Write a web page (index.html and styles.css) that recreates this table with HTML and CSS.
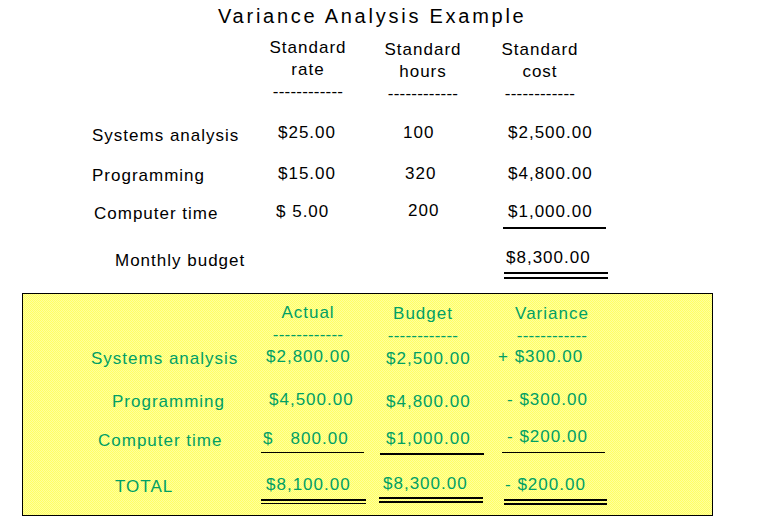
FILE: index.html
```html
<!DOCTYPE HTML>
<html>

<head>
  <title>Variance Analysis Example</title>
  <meta charset="utf-8" />
  <link rel="stylesheet" href="styles.css">
</head>

<body>
<h1 class="title">Variance Analysis Example</h1>

<!-- standard cost part -->
<div class="budget">
  <div class="row head">
    <div></div>
    <div class="hd up2">Standard<br>rate<br><span class="dash">------------</span></div>
    <div class="hd">Standard<br>hours<br><span class="dash">------------</span></div>
    <div class="hd">Standard<br>cost<br><span class="dash">------------</span></div>
  </div>
  <div class="row r1">
    <div class="lab">Systems analysis</div>
    <div class="c1">$25.00</div>
    <div class="c2">100</div>
    <div class="c3">$2,500.00</div>
  </div>
  <div class="row r2">
    <div class="lab">Programming</div>
    <div class="c1">$15.00</div>
    <div class="c2">320</div>
    <div class="c3">$4,800.00</div>
  </div>
  <div class="row r3">
    <div class="lab">Computer time</div>
    <div class="c1">$ 5.00</div>
    <div class="c2">200</div>
    <div class="c3">$1,000.00<div class="rule"></div></div>
  </div>
  <div class="row r4">
    <div class="lab">Monthly budget</div>
    <div></div>
    <div></div>
    <div class="c3">$8,300.00<div class="rule2"></div></div>
  </div>
</div>

<!-- actual vs budget part -->
<div class="variance">
  <div class="row head">
    <div></div>
    <div class="hd up1">Actual<br><span class="dash">------------</span></div>
    <div class="hd">Budget<br><span class="dash">------------</span></div>
    <div class="hd">Variance<br><span class="dash">------------</span></div>
  </div>
  <div class="row r1">
    <div class="lab">Systems analysis</div>
    <div class="c1">$2,800.00</div>
    <div class="c2">$2,500.00</div>
    <div class="c3">+ $300.00</div>
  </div>
  <div class="row r2">
    <div class="lab">Programming</div>
    <div class="c1">$4,500.00</div>
    <div class="c2">$4,800.00</div>
    <div class="c3">- $300.00</div>
  </div>
  <div class="row r3">
    <div class="lab">Computer time</div>
    <div class="c1">$   800.00<div class="rule"></div></div>
    <div class="c2">$1,000.00<div class="rule"></div></div>
    <div class="c3">- $200.00<div class="rule"></div></div>
  </div>
  <div class="row r4">
    <div class="lab">TOTAL</div>
    <div class="c1">$8,100.00<div class="rule2"></div></div>
    <div class="c2">$8,300.00<div class="rule2"></div></div>
    <div class="c3">- $200.00<div class="rule2"></div></div>
  </div>
</div>
</body>

</html>
```

FILE: styles.css
```css
* {
  margin: 0;
  padding: 0;
}

body {
  width: 780px;
  height: 518px;
  overflow: hidden;
  background: #fff;
  color: #000;
  font-family: "Liberation Sans", Arial, sans-serif;
  font-size: 17px;
  letter-spacing: 1px;
}

.title {
  margin: 4px 0 0 218px;
  font-size: 20px;
  line-height: 24px;
  font-weight: normal;
  letter-spacing: 2.75px;
}

.row {
  display: grid;
  align-items: start;
  line-height: 20px;
}

.row > div {
  white-space: pre;
}

.hd {
  width: 80px;
  line-height: 22px;
  text-align: center;
}

.dash {
  letter-spacing: 0.2px;
}

.up1 {
  margin-top: -1px;
}

.up2 {
  margin-top: -2px;
}

.rule {
  border-top: 2px solid #000;
}

.rule2 {
  height: 2px;
  border-top: 2px solid #000;
  border-bottom: 2px solid #000;
}

/* standard cost part */
.budget .row {
  grid-template-columns: 268px 115px 117px 1fr;
}

.budget .head { margin-top: 11px; }
.budget .r1 { margin-top: 18px; }
.budget .r2 { margin-top: 18px; }
.budget .r3 { margin-top: 16px; }
.budget .r4 { margin-top: 19px; }

.budget .lab {
  padding: 2px 0 0 92px;
}

.budget .r1 .lab { padding-top: 3px; }
.budget .r3 .lab { padding-left: 94px; }
.budget .r4 .lab { padding: 3px 0 0 115px; }

.budget .c1 { padding-left: 10px; }
.budget .c2 { padding-left: 20px; }
.budget .c3 { padding-left: 8px; }

.budget .r2 .c2 { padding-left: 22px; }
.budget .r3 .c1 { padding-left: 8px; }
.budget .r3 .c2 { padding-left: 25px; margin-top: -1px; }
.budget .r4 .c3 { padding-left: 6px; }

.budget .r3 .rule {
  width: 103px;
  margin: 5px 0 0 -5px;
}

.budget .r4 .rule2 {
  width: 104px;
  height: 3px;
  margin: 4px 0 0 -2px;
}

/* actual vs budget part */
.variance {
  box-sizing: border-box;
  width: 691px;
  height: 223px;
  margin: 14px 0 0 22px;
  padding-top: 9px;
  border: 1px solid #000;
  background: repeating-conic-gradient(#ffff66 0 25%, #ffff9c 0 50%) 0 0 / 2px 2px;
  color: #00a064;
}

.variance .row {
  grid-template-columns: 240px 120px 115px 1fr;
}

.variance .r2 { margin-top: 21px; }
.variance .r3 { margin-top: 17px; }
.variance .r4 { margin-top: 20px; }

.variance .head .hd:nth-child(2) { margin-left: 5px; }
.variance .head .hd:nth-child(4) { margin-left: 14px; }

.variance .lab {
  padding: 2px 0 0 68px;
}

.variance .r2 .lab { padding-left: 89px; }
.variance .r3 .lab { padding-left: 75px; }
.variance .r4 .lab { padding-left: 92px; }

.variance .c1 { padding-left: 3px; }
.variance .c2 { padding: 2px 0 0 3px; }
.variance .c3 { padding-left: 9px; }

.variance .r1 .c3 { padding-left: 0; }
.variance .r2 .c1 { padding-left: 6px; }
.variance .r3 .c1 { padding-left: 0; }
.variance .r3 .c2 { padding-top: 0; }
.variance .r3 .c3 { margin-top: -2px; }
.variance .r4 .c1 { padding-left: 3px; }
.variance .r4 .c2 { padding: 0; margin-top: -1px; }
.variance .r4 .c3 { padding-left: 7px; }

.variance .r3 .c1 .rule {
  width: 103px;
  border-top-width: 1px;
  margin: 3px 0 0 -2px;
}

.variance .r3 .c2 .rule {
  width: 104px;
  margin: 4px 0 0 -6px;
}

.variance .r3 .c3 .rule {
  width: 103px;
  border-top-width: 1px;
  margin: 5px 0 0 -5px;
}

.variance .r4 .c1 .rule2 {
  width: 105px;
  border-bottom-width: 1px;
  margin: 4px 0 0 -5px;
}

.variance .r4 .c2 .rule2 {
  width: 104px;
  margin: 3px 0 0 -4px;
}

.variance .r4 .c3 .rule2 {
  width: 103px;
  margin: 4px 0 0 -1px;
}
```
